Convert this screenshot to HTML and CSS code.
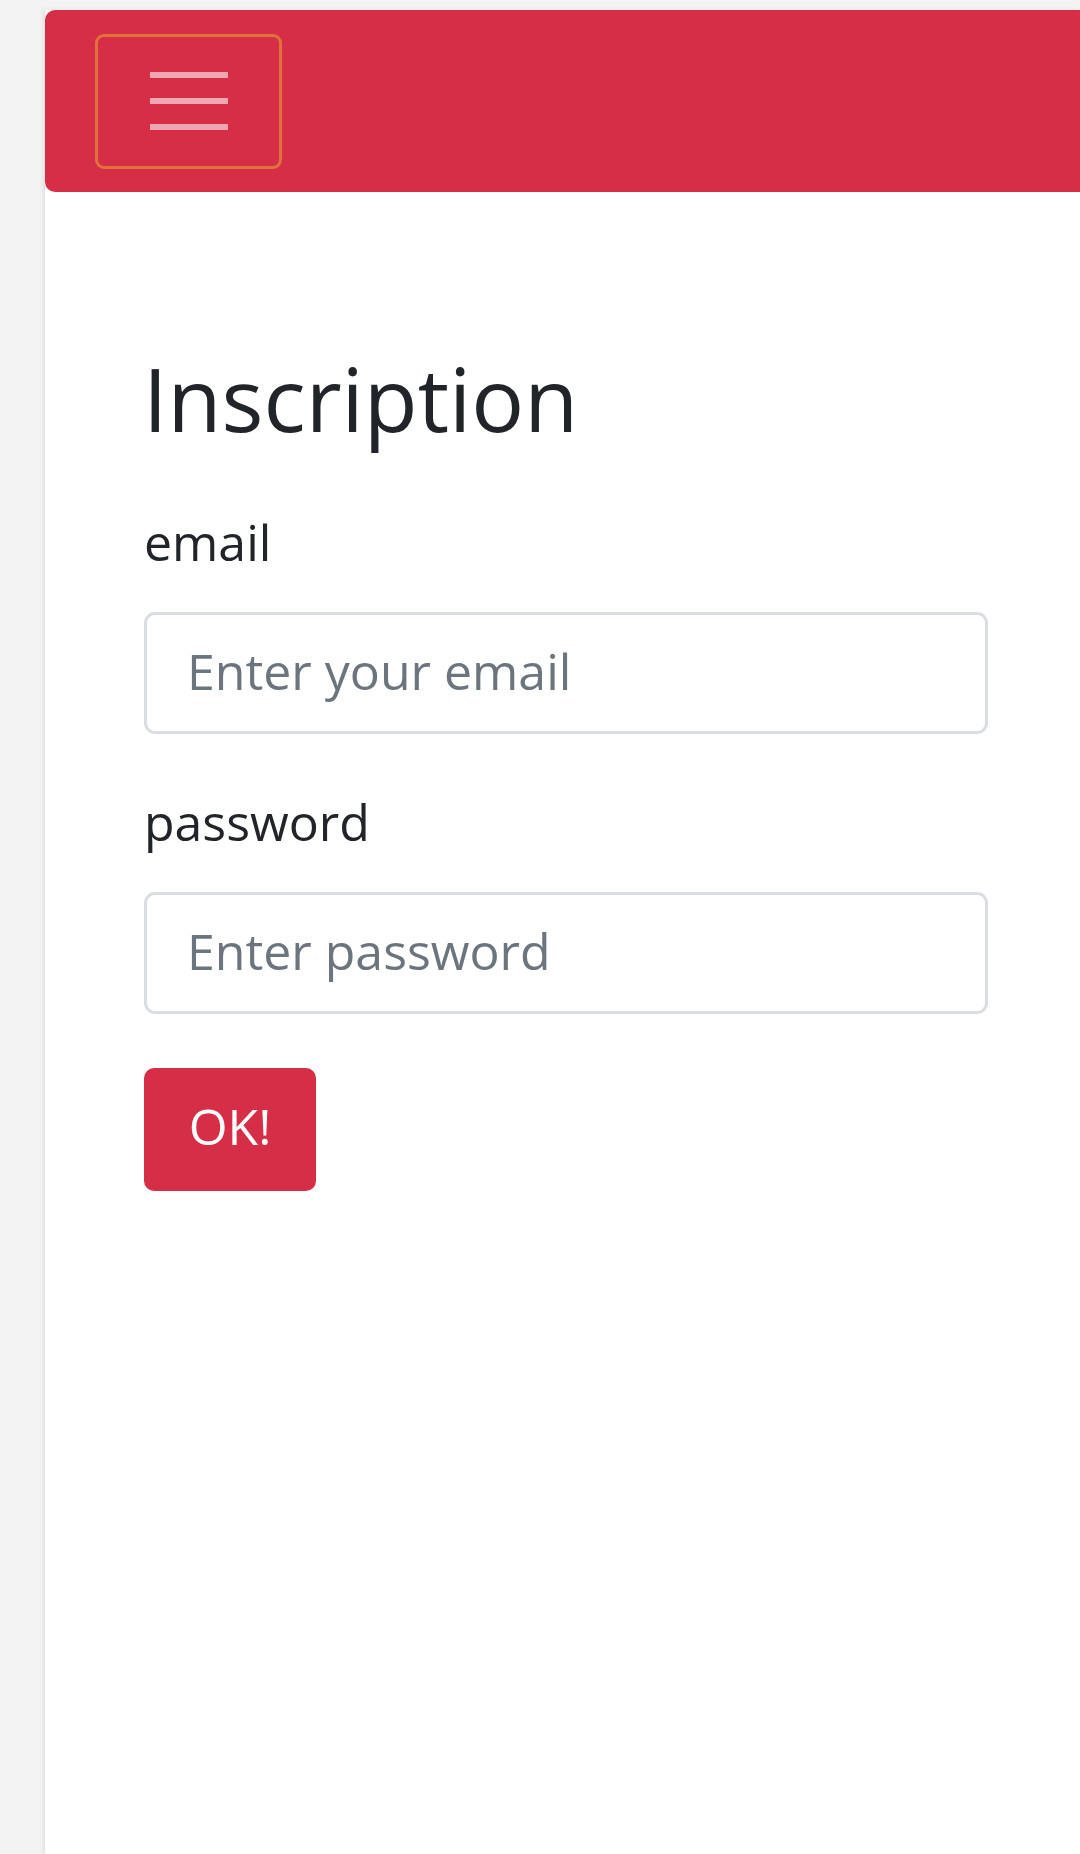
FILE: index.html
```html
<!DOCTYPE html>
<html lang="fr">
<head>
<meta charset="utf-8">
<title>Inscription</title>
<link rel="stylesheet" href="styles.css">
</head>
<body>
<div class="page">
  <nav class="navbar">
    <button class="toggler" type="button" aria-label="Menu">
      <span class="bar"></span>
      <span class="bar"></span>
      <span class="bar"></span>
    </button>
  </nav>
  <main class="content">
    <h1 class="title">Inscription</h1>
    <form class="form">
      <label class="label" for="email">email</label>
      <input class="field" id="email" type="email" placeholder="Enter your email">
      <label class="label label-second" for="password">password</label>
      <input class="field" id="password" type="password" placeholder="Enter password">
      <button class="btn" type="button">OK!</button>
    </form>
  </main>
</div>
</body>
</html>
```

FILE: styles.css
```css
html, body {
  margin: 0;
  padding: 0;
}
body {
  background: #f3f3f3;
  font-family: "Open Sans", "Noto Sans", sans-serif;
  color: #212529;
  overflow: hidden;
}
.page {
  margin: 10px 0 0 45px;
  min-height: calc(100vh - 10px);
  background: #ffffff;
  box-shadow: -2px 0 4px rgba(0, 0, 0, 0.08);
}
.navbar {
  height: 182px;
  box-sizing: border-box;
  background: #d72e48;
  border-radius: 10px 0 0 10px;
  display: flex;
  align-items: center;
  padding-left: 50px;
}
.toggler {
  width: 187px;
  height: 135px;
  box-sizing: border-box;
  border: 3px solid #e2703a;
  border-radius: 9px;
  background: transparent;
  padding: 0;
  display: flex;
  flex-direction: column;
  align-items: center;
  justify-content: center;
  gap: 20px;
}
.bar {
  display: block;
  width: 78px;
  height: 6px;
  background: rgba(255, 255, 255, 0.58);
}
.content {
  padding: 0 92px 0 99px;
}
.title {
  margin: 154px 0 0 -1px;
  font-size: 88px;
  line-height: 104px;
  font-weight: 400;
}
.form {
  display: flex;
  flex-direction: column;
  align-items: flex-start;
}
.label {
  margin-top: 55px;
  font-size: 50px;
  line-height: 75px;
}
.label-second {
  margin-top: 51px;
}
.field {
  margin-top: 32px;
  width: 100%;
  height: 122px;
  box-sizing: border-box;
  border: 3px solid #dadde1;
  border-radius: 11px;
  padding: 0 40px 4px;
  font-family: "Open Sans", "Noto Sans", sans-serif;
  font-size: 50px;
  color: #212529;
  background: #ffffff;
}
.field::placeholder {
  color: #6c757d;
  opacity: 1;
}
.btn {
  margin-top: 54px;
  width: 172px;
  height: 123px;
  border: none;
  border-radius: 10px;
  background: #d72e48;
  color: #ffffff;
  font-family: "Open Sans", "Noto Sans", sans-serif;
  font-size: 50px;
  padding: 0 0 8px;
}
```
